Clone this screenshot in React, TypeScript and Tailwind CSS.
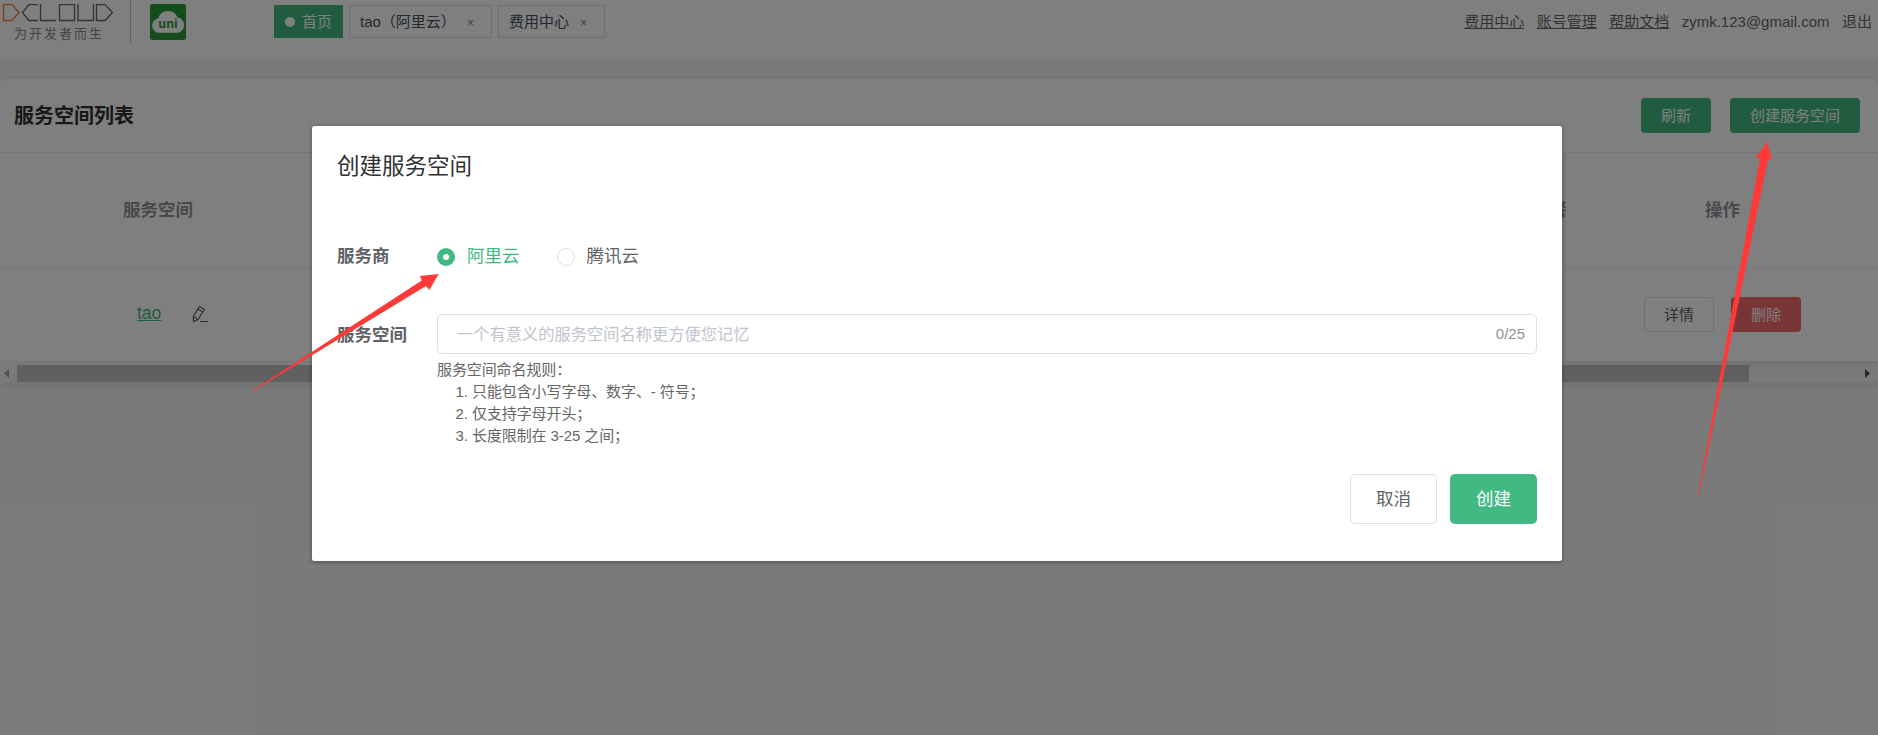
import { clsx } from 'clsx';

interface Tab {
  readonly label: string;
  readonly active?: boolean;
  readonly className: string;
}

const tabs: Tab[] = [
  { label: '首页', active: true, className: 'w-[69px] pl-[11px]' },
  { label: 'tao（阿里云）', className: 'w-[143px] pl-[10px] pr-[17px]' },
  { label: '费用中心', className: 'w-[107px] pl-[10px] pr-[17px]' },
];

const links = ['费用中心', '账号管理', '帮助文档'];

const rules = ['只能包含小写字母、数字、- 符号；', '仅支持字母开头；', '长度限制在 3-25 之间；'];

function DcloudLogo() {
  return (
    <svg className="mt-1 block" width="116" height="18" viewBox="0 0 116 18" fill="none">
      <path d="M3.5 .5H12L19 8.5L12 16.5H3.5Z" stroke="#f47a30" strokeWidth="1.3" />
      <g stroke="#666" strokeWidth="1.3">
        <path d="M38 .5H29L22.500 8.500L29 16.500H38" />
        <path d="M40.500 0V16.500H56" />
        <path d="M59.500 .5H74.500V16.500H59.500Z" />
        <path d="M78 0V16.500H93.500V0" />
        <path d="M96.500 .5H105L112.500 8.500L105 16.500H96.500Z" />
      </g>
    </svg>
  );
}

function UniLogo() {
  return (
    <svg className="block" width="36" height="36" viewBox="0 0 36 36">
      <rect width="36" height="36" rx="2.500" fill="#2b9939" />
      <path
        d="M9.500 28.800a7.300 7.300 0 0 1-1.300-14.500A10.300 10.300 0 0 1 27.500 13.300A7.800 7.800 0 0 1 26 28.800Z"
        fill="#fff"
      />
      <text
        x="18"
        y="23.500"
        textAnchor="middle"
        className="font-['Open_Sans',sans-serif] text-[12px] font-bold"
        fill="#2b9939"
      >
        uni
      </text>
    </svg>
  );
}

function Header() {
  return (
    <header className="flex h-[59px] items-start bg-white">
      <div className="h-11 w-[131px] shrink-0 border-r border-[#ccc]">
        <DcloudLogo />
        <p className="mt-1 ml-[14px] text-[13px] leading-4 tracking-[2px] text-[#888]">为开发者而生</p>
      </div>
      <div className="mt-1 ml-[19px] shrink-0">
        <UniLogo />
      </div>
      <nav className="mt-[5px] ml-[88px] flex gap-1.5">
        {tabs.map((tab) => (
          <div
            key={tab.label}
            className={clsx(
              'flex h-[33px] items-center whitespace-nowrap border pt-px',
              tab.active
                ? 'border-[#42b983] bg-[#42b983] text-white'
                : 'justify-between border-[#d8dce5] text-[#495060]',
              tab.className,
            )}
          >
            {tab.active && <span className="mr-[7px] -ml-px size-[10px] rounded-full bg-white" />}
            <span>{tab.label}</span>
            {!tab.active && <span className="pt-0.5 text-xs text-[#808590]">×</span>}
          </div>
        ))}
      </nav>
      <div className="mt-[11px] mr-[6px] ml-auto flex gap-[12.500px] leading-[22px] text-[#666]">
        {links.map((link) => (
          <a key={link} className="underline">
            {link}
          </a>
        ))}
        <span>zymk.123@gmail.com</span>
        <span>退出</span>
      </div>
    </header>
  );
}

function PencilIcon() {
  return (
    <svg width="17" height="18" viewBox="0 0 17 18" fill="none" stroke="#606266" strokeWidth="1.200">
      <path d="M7.500 1.500L12.300 4.500L6 14.500L1.500 16.500L1.300 11.500Z" />
      <path d="M6 4L10.800 7M1.300 11.500L6 14.500M8 16.500H16" />
    </svg>
  );
}

function SpaceList() {
  return (
    <section className="mt-5 h-[303px] rounded-md bg-white shadow-[0_2px_12px_rgba(0,0,0,0.1)]">
      <div className="flex h-[74px] items-center border-b border-[#ebeef5] pr-[18px] pl-[14px]">
        <h1 className="text-[20px] font-bold text-[#303133]">服务空间列表</h1>
        <button type="button" className="ml-auto h-[35px] w-[70px] rounded bg-[#42b983] pt-px text-white">
          刷新
        </button>
        <button type="button" className="ml-[19px] h-[35px] w-[130px] rounded bg-[#42b983] pt-px text-white">
          创建服务空间
        </button>
      </div>
      <div className="flex text-[17.500px]">
        <div className="w-[1566px]">
          <div className="flex h-[115px] items-center justify-between border-b border-[#ebeef5] pt-px font-bold text-[#909399]">
            <span className="ml-[123px]">服务空间</span>
            <span className="-mr-px">套餐</span>
          </div>
          <div className="flex h-[93px] items-center pb-0.5 pl-[137px]">
            <a className="text-[#42b983] underline">tao</a>
            <span className="ml-[31px]">
              <PencilIcon />
            </span>
          </div>
        </div>
        <div className="relative flex-1 bg-white shadow-[0_0_12px_rgba(0,0,0,0.12)] [clip-path:inset(0_0_-12px_-12px)]">
          <div className="flex h-[115px] items-center border-b border-[#ebeef5] pt-px pl-[139px] font-bold text-[#909399]">
            操作
          </div>
          <div className="flex h-[93px] items-center gap-[17px] pl-[78px] text-[15px]">
            <button type="button" className="h-[35px] w-[70px] rounded border border-[#dcdfe6] pt-px text-[#606266]">
              详情
            </button>
            <button type="button" className="h-[35px] w-[70px] rounded bg-[#f56c6c] pt-px text-white">
              删除
            </button>
          </div>
        </div>
      </div>
      <div className="flex h-[21px] items-center border-t border-[#ebeef5] bg-[#f5f5f5] pt-[3px]">
        <svg className="ml-1" width="5" height="9" viewBox="0 0 5 9" fill="#a3a3a3">
          <path d="M5 0V9L0 4.500Z" />
        </svg>
        <div className="ml-2 h-[17px] w-[1732px] bg-[#c1c1c1]" />
        <svg className="mr-2 ml-auto" width="5" height="9" viewBox="0 0 5 9" fill="#505050">
          <path d="M0 0V9L5 4.500Z" />
        </svg>
      </div>
    </section>
  );
}

function CreateDialog() {
  return (
    <div
      role="dialog"
      className="absolute top-[126px] left-[312px] h-[435px] w-[1250px] rounded-[2.500px] bg-white px-[25px] pt-[26px] text-[17.500px] text-[#606266] shadow-[0_1px_4px_rgba(0,0,0,0.35)]"
    >
      <h2 className="text-[22.500px] leading-[30px] text-[#303133]">创建服务空间</h2>
      <div className="mt-[49px] flex h-[50px] items-center">
        <span className="w-[100px] pt-px font-bold">服务商</span>
        <label className="flex items-center pt-px text-[#42b983]">
          <span className="mr-3 flex size-[18px] items-center justify-center rounded-full bg-[#42b983]">
            <span className="size-[6px] rounded-full bg-white" />
          </span>
          阿里云
        </label>
        <label className="ml-[37px] flex items-center pt-px">
          <span className="mr-3 size-[18px] rounded-full border border-[#dcdfe6]" />
          腾讯云
        </label>
      </div>
      <div className="mt-[33px] flex">
        <span className="w-[100px] pt-px leading-10 font-bold">服务空间</span>
        <div className="flex-1">
          <div className="flex h-10 items-center justify-between rounded-[5px] border border-[#dcdfe6] pt-px pr-[11px] pl-[19px] text-[15px]">
            <span className="text-[16.250px] text-[#c0c4cc]">一个有意义的服务空间名称更方便您记忆</span>
            <span className="text-[#909399]">0/25</span>
          </div>
          <div className="mt-[5px] text-[15px] leading-[22px] tracking-[-0.1px] text-[#666]">
            <p>服务空间命名规则：</p>
            <ol className="list-decimal pl-[35px]">
              {rules.map((rule) => (
                <li key={rule}>{rule}</li>
              ))}
            </ol>
          </div>
        </div>
      </div>
      <div className="mt-[27px] flex justify-end gap-[13px]">
        <button type="button" className="h-[50px] w-[87px] rounded-[5px] border border-[#dcdfe6]">
          取消
        </button>
        <button type="button" className="h-[50px] w-[87px] rounded-[5px] bg-[#42b983] text-white">
          创建
        </button>
      </div>
    </div>
  );
}

function Arrows() {
  return (
    <svg className="absolute inset-0" width="1878" height="735" viewBox="0 0 1878 735" fill="#ff3838">
      <path d="M251.500 391L421.700 280.500L420 276L438.700 274L429.300 290L426 286L252.500 391.500Z" />
      <path d="M1698 495L1760 158.500L1756 157L1767.300 142L1772 160L1768 159.500L1699 495Z" />
    </svg>
  );
}

export default function App() {
  return (
    <div className="relative h-[735px] w-[1878px] overflow-hidden bg-[#f5f5f5] font-['Liberation_Sans','Noto_Sans_CJK_SC',sans-serif] text-[15px]">
      <Header />
      <SpaceList />
      <div className="absolute inset-0 bg-black/50" />
      <CreateDialog />
      <Arrows />
    </div>
  );
}
